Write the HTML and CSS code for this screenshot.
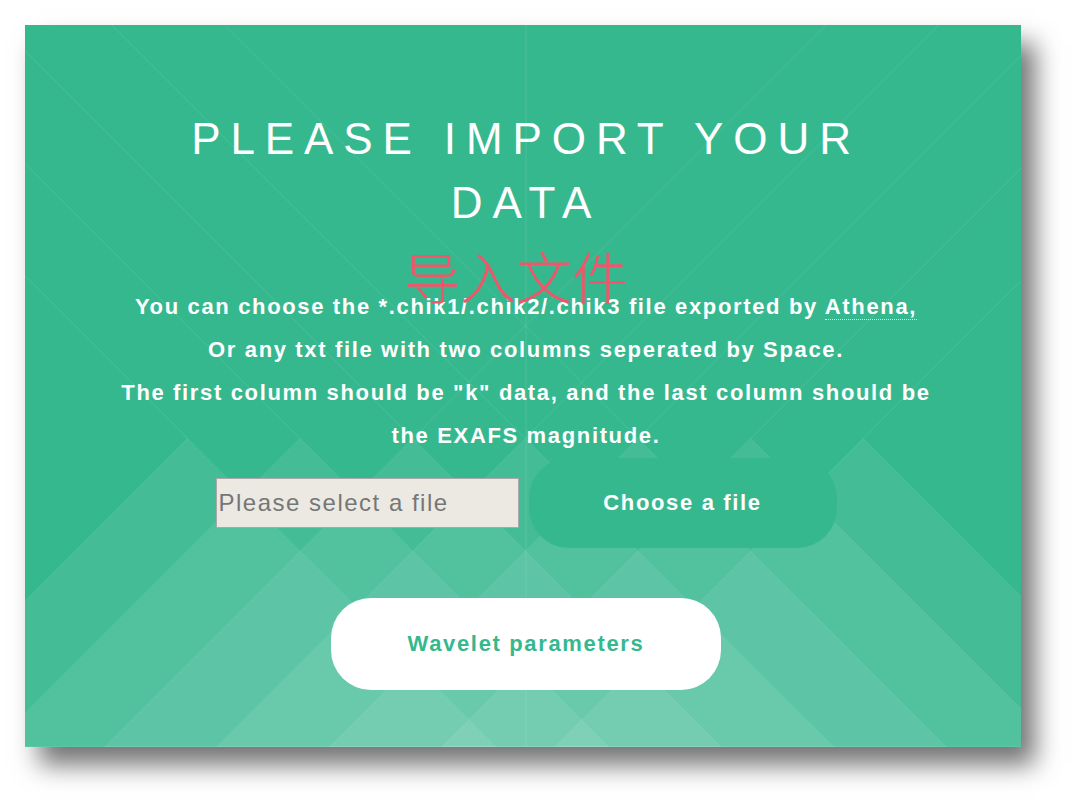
FILE: index.html
```html
<!DOCTYPE html>
<html lang="en">
<head>
    <meta charset="UTF-8">
    <meta name="viewport" content="width=device-width, initial-scale=1.0">
    <title>Import data</title>
    <link rel="stylesheet" href="styles.css">
</head>
<body>
    <div class="stage">
        <section class="panel">
            <svg class="pattern" viewBox="0 0 996 722" preserveAspectRatio="none" aria-hidden="true">
                <g class="tri">
                    <polygon points="162.5,413.5 471,722 -146,722"/>
                    <polygon points="275.1,413.5 583.6,722 -33.4,722"/>
                    <polygon points="387.7,413.5 696.2,722 79.2,722"/>
                    <polygon points="500.3,413.5 808.8,722 191.8,722"/>
                    <polygon points="612.9,413.5 921.4,722 304.4,722"/>
                    <polygon points="725.5,413.5 1034,722 417,722"/>
                    <polygon points="838.1,413.5 1146.6,722 529.6,722"/>
                </g>
                <g class="rays">
                    <line x1="162.5" y1="413.5" x2="0" y2="251"/>
                    <line x1="275.1" y1="413.5" x2="0" y2="138.4"/>
                    <line x1="387.7" y1="413.5" x2="0" y2="25.8"/>
                    <line x1="500.3" y1="413.5" x2="86.8" y2="0"/>
                    <line x1="612.9" y1="413.5" x2="199.4" y2="0"/>
                    <line x1="387.7" y1="413.5" x2="801.2" y2="0"/>
                    <line x1="500.3" y1="413.5" x2="913.8" y2="0"/>
                    <line x1="612.9" y1="413.5" x2="996" y2="30.4"/>
                    <line x1="725.5" y1="413.5" x2="996" y2="143"/>
                    <line x1="838.1" y1="413.5" x2="996" y2="255.6"/>
                    <line x1="501" y1="0" x2="501" y2="722"/>
                </g>
            </svg>

            <div class="inner">
                <h2 class="title">Please import your data</h2>
                <p class="desc">
                    You can choose the *.chik1/.chik2/.chik3 file exported by <a href="#">Athena,</a><br>
                    Or any txt file with two columns seperated by Space.<br>
                    The first column should be "k" data, and the last column should be the EXAFS magnitude.
                </p>

                <div class="file-row">
                    <input type="text" class="file-name" placeholder="Please select a file" readonly>
                    <button type="button" class="choose">Choose a file</button>
                </div>

                <button type="button" class="wavelet">Wavelet parameters</button>
            </div>

            <span class="note">导入文件</span>
        </section>
    </div>
</body>
</html>
```

FILE: styles.css
```css
body {
    margin: 0;
    background: #fff;
    font-family: "Liberation Sans", Arial, sans-serif;
}
.stage {
    padding: 25px 25px 60px;
}
.panel {
    position: relative;
    width: 996px;
    height: 722px;
    box-sizing: border-box;
    padding: 82px 0 0 6px;
    background: #36b88f;
    box-shadow: 14px 18px 24px rgba(0, 0, 0, 0.55);
    color: #fff;
    overflow: hidden;
}
.pattern {
    position: absolute;
    left: 0;
    top: 0;
    width: 100%;
    height: 100%;
}
.pattern polygon {
    fill: #fff;
    fill-opacity: 0.075;
    stroke: #fff;
    stroke-opacity: 0.08;
}
.pattern line {
    stroke: #fff;
    stroke-opacity: 0.1;
    stroke-width: 1;
}
.inner {
    position: relative;
    text-align: center;
}
.title {
    margin: 0 auto;
    max-width: 760px;
    font-size: 44px;
    font-weight: normal;
    line-height: 64px;
    letter-spacing: 0.225em;
    text-transform: uppercase;
}
.desc {
    margin: 50px auto 0;
    max-width: 830px;
    font-size: 22px;
    font-weight: bold;
    line-height: 43px;
    letter-spacing: 0.075em;
}
.desc a {
    color: inherit;
    text-decoration: none;
    border-bottom: 1px dotted rgba(255, 255, 255, 0.8);
}
.file-row {
    display: flex;
    justify-content: center;
    align-items: center;
    gap: 10px;
    margin-top: 1px;
}
.file-name {
    width: 303px;
    height: 50px;
    box-sizing: border-box;
    padding: 0 2px;
    border: 1px solid #a9a9a9;
    background: #ebe9e2;
    font-family: "Liberation Sans", Arial, sans-serif;
    font-size: 24px;
    letter-spacing: 1.5px;
    color: #767676;
    outline: none;
}
.file-name::placeholder {
    color: #767676;
}
.choose, .wavelet {
    border: none;
    border-radius: 40px;
    font-family: "Liberation Sans", Arial, sans-serif;
    font-size: 22px;
    font-weight: bold;
    letter-spacing: 0.075em;
    cursor: pointer;
}
.choose {
    width: 308px;
    height: 90px;
    background: #36b88f;
    color: #fff;
}
.wavelet {
    display: block;
    width: 390px;
    height: 92px;
    margin: 50px auto 0;
    background: #fff;
    color: #36b88f;
}
.note {
    position: absolute;
    left: 379px;
    top: 222px;
    font-family: "Noto Sans CJK SC", sans-serif;
    font-size: 56px;
    font-weight: 300;
    line-height: 1;
    color: #f2556a;
}
```
